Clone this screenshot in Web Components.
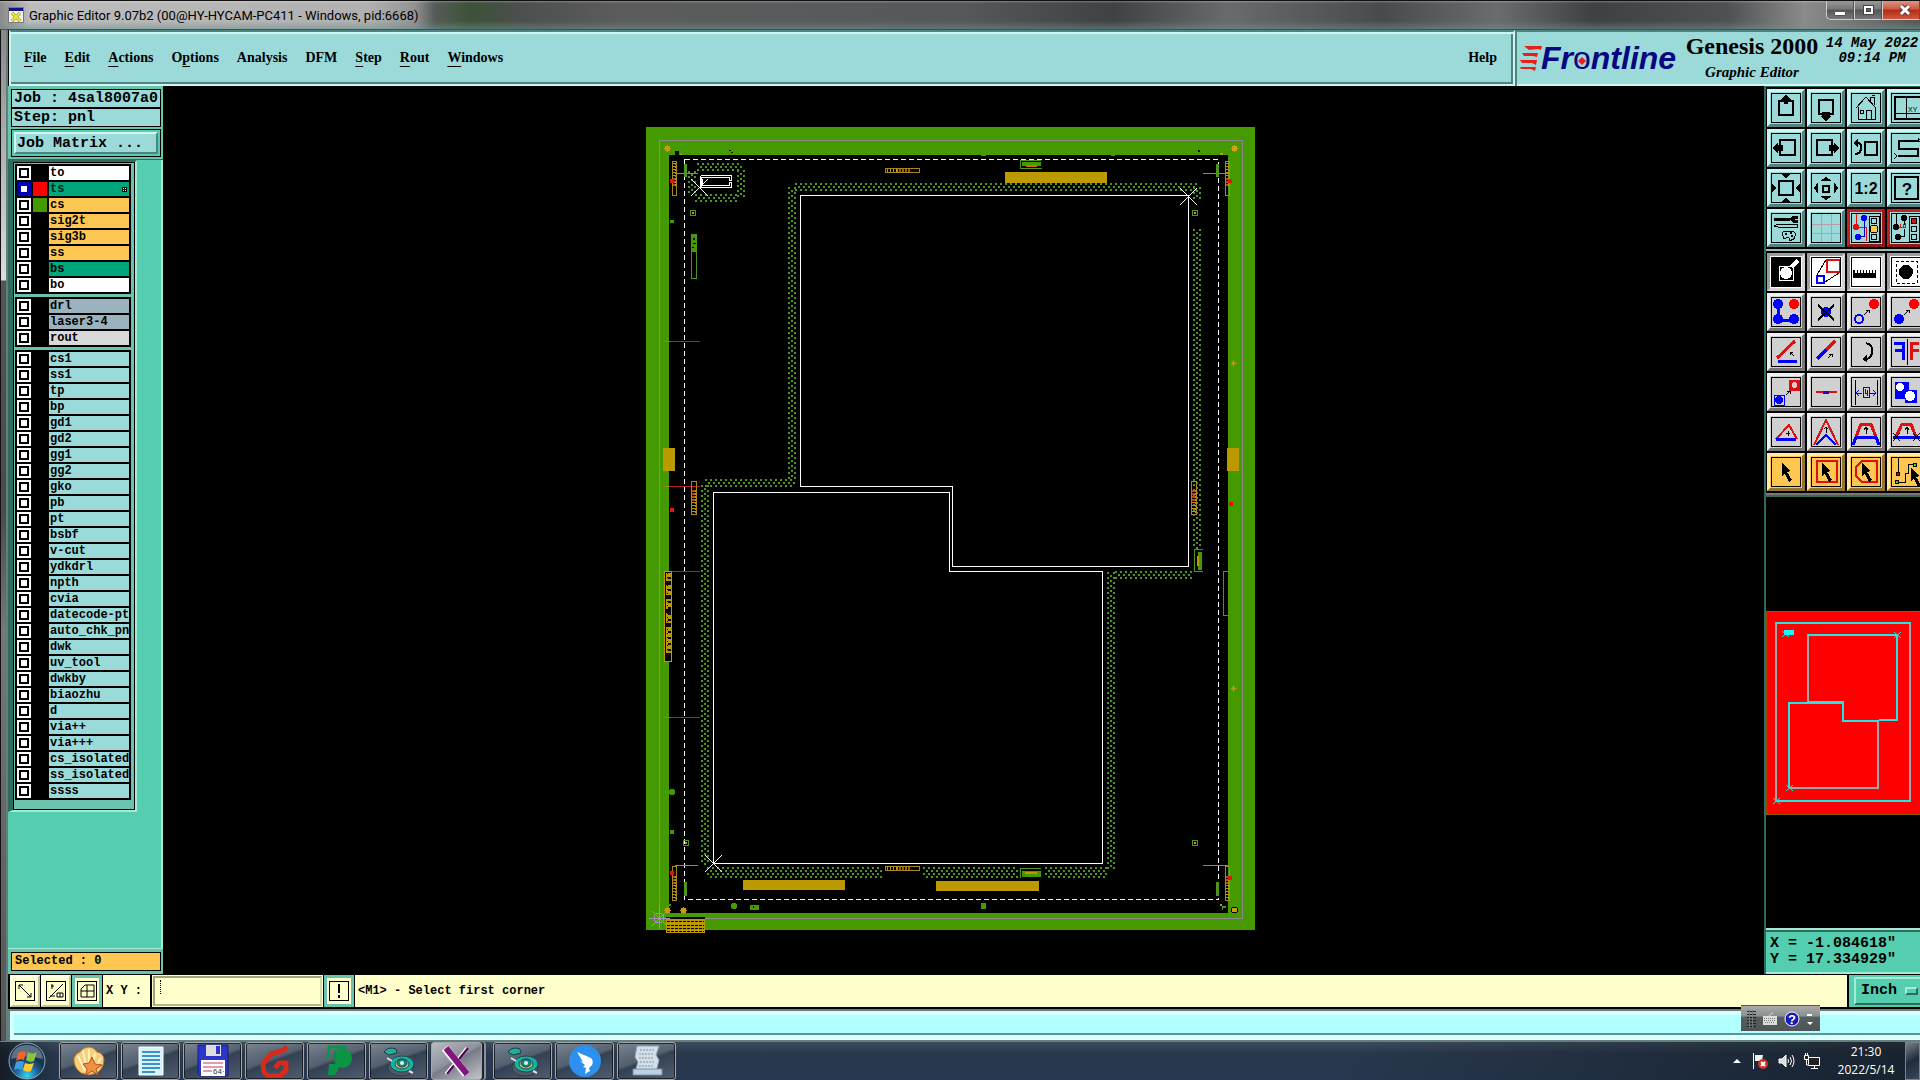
<!doctype html>
<html lang="en">

<head>
	<meta charset="utf-8">
	<title>Graphic Editor 9.07b2</title>
	<meta name="viewport" content="width=device-width, initial-scale=1.0">
	<style>
		:root {
			--aqua: #9cdada;
			--aqua-light: #cdf5f1;
			--aqua-dark: #4f8382;
			--green: #54ceaf;
			--green-mid: #69c3ad;
			--green-dark: #2f6b5f;
			--gold: #fdc751;
			--cream: #feffca;
			--mono: "Liberation Mono", monospace;
			--serif: "Liberation Serif", serif;
			--ui: "Open Sans", sans-serif;
		}
		body {
			margin: 0;
			background: #000;
			overflow: hidden;
		}
	</style>
</head>

<body>
	<desk-top>
		<title-bar>Graphic Editor 9.07b2 (00@HY-HYCAM-PC411 - Windows, pid:6668)</title-bar>
		<app-frame>
			<menu-bar slot="top"></menu-bar>
			<brand-panel slot="top"></brand-panel>
			<job-panel slot="main"></job-panel>
			<board-view slot="main"></board-view>
			<tool-panel slot="main"></tool-panel>
			<command-bar slot="bottom"></command-bar>
			<message-strip slot="bottom"></message-strip>
		</app-frame>
		<task-bar></task-bar>
	</desk-top>

	<script>
		// small helper: every element gets an open root with its own styles
		function define(name, render, after) {
			customElements.define(name, class extends HTMLElement {
				constructor() {
					super();
					this.attachShadow({ mode: 'open' });
				}
				connectedCallback() {
					this.shadowRoot.innerHTML = render(this);
					if (after) after(this, this.shadowRoot);
				}
			});
		}

		define('desk-top', () => `
			<style>
				:host { display: flex; flex-direction: column; height: 100vh; }
			</style>
			<slot></slot>`);

		define('title-bar', () => `
			<style>
				:host {
					display: flex; justify-content: space-between; height: 28px; flex: none;
					border-top: 1px solid #111; border-bottom: 1px solid #3c5553;
					background:
						linear-gradient(#fff3 0 1px, transparent 2px 20px, #6b918a88),
						linear-gradient(90deg, #8a8a8a 0, #bdbdbd 30px, #b0b0b0 370px, #929292 415px, #555b57 435px, #3d5238 470px, #4b4f4d 520px, #5c5c5c 620px, #55595b 50%, #3f4245 58%, #686b6d 64%, #484a4c 72%, #6b6c6e 78%, #3e4042 83%, #505153 90%, #8b8b8b 94%, #555 100%);
				}
				.name { display: flex; align-items: center; gap: 5px; padding-left: 8px; font: 13px Roboto, sans-serif; color: #000; }
				.controls { display: flex; align-items: flex-start; }
				button {
					display: flex; align-items: center; justify-content: center;
					width: 28px; height: 19px; padding: 0; border: 1px solid #ccc; border-top: 0; border-right-color: #555;
					background: linear-gradient(#999, #777 45%, #555 50%, #777);
				}
				button:first-child { border-bottom-left-radius: 5px; }
				button:last-child { width: 38px; padding-left: 8px; background: linear-gradient(#df9383, #c95b46 45%, #b32c14 50%, #cf563c); }
			</style>
			<span class="name">
				<svg width="16" height="16" viewBox="0 0 16 16" aria-hidden="true"><path fill="#eee" stroke="#777" d="M.5.5h15v15H.5z"/><path fill="#118" d="M1 1h14v3H1z"/><path stroke="#774" stroke-width="3" d="m4 6 8 8m0-8-8 8"/><path stroke="#ee2" stroke-width="2" d="m4 6 8 8m0-8-8 8"/></svg>
				<slot></slot>
			</span>
			<span class="controls">
				<button aria-label="Minimize"><svg width="14" height="12"><path fill="#fff" stroke="#555" d="M1.500 7.500h11v4h-11z"/></svg></button>
				<button aria-label="Maximize"><svg width="13" height="12"><path fill="none" stroke="#444" stroke-width="4" d="M3 3h7v6H3z"/><path fill="none" stroke="#fff" stroke-width="2" d="M3 3h7v6H3z"/></svg></button>
				<button aria-label="Close"><svg width="14" height="12"><path stroke="#633" stroke-width="5" d="m3 2 8 8m0-8-8 8"/><path stroke="#fff" stroke-width="3" d="m3 2 8 8m0-8-8 8"/></svg></button>
			</span>`);

		define('app-frame', () => `
			<style>
				:host { display: flex; flex: 1; min-height: 0; background: #000; }
				.edge { flex: none; width: 5px; border: solid #111; border-width: 0 1px; border-right: 2px solid #62807b; background: linear-gradient(#888, #aaa 100px, #ddd 250px, #555 251px, #4a4a4a 480px, #777 600px, #555); }
				.client { flex: 1; min-width: 0; display: flex; flex-direction: column; }
				.top { display: flex; height: 56px; flex: none; padding-left: 1px; }
				.main { display: flex; flex: 1; min-height: 0; }
			</style>
			<div class="edge"></div>
			<div class="client">
				<div class="top"><slot name="top"></slot></div>
				<div class="main"><slot name="main"></slot></div>
				<slot name="bottom"></slot>
			</div>`);

		const menus = ['<u>F</u>ile', '<u>E</u>dit', '<u>A</u>ctions', 'O<u>p</u>tions', 'Analysis', 'DFM', '<u>S</u>tep', '<u>R</u>out', '<u>W</u>indows'];

		define('menu-bar', () => `
			<style>
				:host {
					flex: 1; display: flex; align-items: center; justify-content: space-between; box-sizing: border-box; padding: 0 16px 0 13px;
					border: 2px solid; border-color: var(--aqua-dark) var(--aqua-light) var(--aqua-light);
					background: var(--aqua); box-shadow: inset 0 2px var(--aqua-light), inset -2px -2px var(--aqua-dark);
				}
				nav { display: flex; gap: 18px; }
				button { padding: 0; border: 0; background: none; color: #000; font: bold 14px/20px var(--serif); }
				u { text-underline-offset: 4px; text-decoration-thickness: 1px; }
			</style>
			<nav>${menus.map(m => `<button>${m}</button>`).join('')}</nav>
			<button>Help</button>`);

		define('brand-panel', () => `
			<style>
				:host {
					flex: none; width: 405px; display: flex; box-sizing: border-box; padding-left: 3px; overflow: hidden;
					background: var(--aqua); border: solid var(--aqua-dark); border-width: 2px 0 0 2px;
					box-shadow: inset 0 -2px var(--aqua-light); color: #000; white-space: nowrap;
				}
				svg { flex: none; margin-top: 8px; }
				.title { flex: none; width: 140px; text-align: center; }
				h1 { margin: 0; font: bold 24px/28px var(--serif); }
				h2 { margin: 0; padding-top: 4px; font: italic bold 15px/16px var(--serif); }
				time { flex: none; width: 96px; padding: 4px 0 0 2px; text-align: center; font: italic bold 14px/15px var(--mono); }
			</style>
			<svg width="162" height="36" viewBox="0 0 162 36">
				<g fill="#e8201c"><path d="M4 6h18l-1 4-3-1-9 1zM2 13h16l-1 4-4-1H4zM0 20h17l-1 5-4-2H2zM0 27h16l-1 4-4-2H1z"/></g>
				<text x="21" y="29" font-family="Liberation Sans, sans-serif" font-size="32" font-weight="bold" font-style="italic" fill="#070780">Fr<tspan font-weight="normal" font-style="normal">o</tspan>ntline</text>
				<path fill="#e8201c" d="m62 17 4 4-4 4-4-4z"/>
			</svg>
			<div class="title"><h1>Genesis 2000</h1><h2>Graphic Editor</h2></div>
			<time>14 May 2022<br>09:14 PM</time>`);

		const W = '#fff', T = '#00a67c', G = '#fdc751', B = '#9ab3bf', L = '#d9d9d9', A = '#9cdada';
		const groups = [
			[['to', W], ['ts', T, '#f00', true], ['cs', G, '#449a00'], ['sig2t', G], ['sig3b', G], ['ss', G], ['bs', T], ['bo', W]],
			[['drl', B], ['laser3-4', B], ['rout', L]],
			['cs1', 'ss1', 'tp', 'bp', 'gd1', 'gd2', 'gg1', 'gg2', 'gko', 'pb', 'pt', 'bsbf', 'v-cut', 'ydkdrl', 'npth', 'cvia',
				'datecode-ptc', 'auto_chk_pnl', 'dwk', 'uv_tool', 'dwkby', 'biaozhu', 'd', 'via++', 'via+++', 'cs_isolated_', 'ss_isolated_', 'ssss'].map(n => [n, A])
		];

		define('layer-row', el => `
			<style>
				:host { display: grid; grid-template-columns: 14px 14px 1fr; gap: 2px; height: 14px; }
				input { appearance: none; margin: 0; width: 14px; height: 14px; border: 2px solid #fff; background: #fff; box-shadow: inset 0 0 0 2px #000; }
				input:checked { border-color: #0000b8; box-shadow: inset 0 0 0 2px #0000b8; }
				.swatch { background: ${el.getAttribute('swatch') || '#000'}; }
				label { display: flex; justify-content: space-between; align-items: center; overflow: hidden; padding: 0 2px 0 1px; font: bold 12px/14px var(--mono); white-space: nowrap; color: #000; background: ${el.getAttribute('tone')}; }
				:host([active]) label { color: #00281a; }
				svg { flex: none; }
			</style>
			<input type="checkbox" id="on" ${el.hasAttribute('active') ? 'checked' : ''}>
			<span class="swatch"></span>
			<label for="on"><slot></slot>${el.hasAttribute('active') ? '<svg width="5" height="5"><path fill="#000" d="M0 0h5v5H0z"/><path fill="#fff" d="M1 1h1v1H1zM3 1h1v1H3zM1 3h1v1H1zM3 3h1v1H3z"/></svg>' : ''}</label>`);

		define('job-panel', () => `
			<style>
				:host { flex: none; width: 155px; display: flex; flex-direction: column; font: bold 15px/17px var(--mono); color: #000; background: var(--green-mid); }
				.head { padding: 3px 2px 2px 3px; border-bottom: 1px solid var(--green-dark); }
				.cell { border: 1px solid #000; background: var(--aqua); padding-left: 2px; height: 17px; }
				.matrix { margin-top: 2px; border: 1px solid #000; padding: 2px; background: var(--green); }
				button {
					display: block; width: 100%; height: 22px; padding: 0 1px; text-align: left; font: inherit; color: #000;
					background: var(--aqua); border: 2px solid; border-color: var(--aqua-light) var(--aqua-dark) var(--aqua-dark) var(--aqua-light);
				}
				.list { flex: 1; background: var(--green); border-right: 2px solid #a5ead5; border-bottom: 1px solid #a5ead5; }
				.frame { width: 122px; border: 2px solid; border-color: var(--green-dark) #a5ead5 #a5ead5 var(--green-dark); border-left-width: 5px; }
				.inner { border: 1px solid #000; padding: 1px 3px 9px 1px; background: var(--green-mid); display: grid; gap: 3px; }
				.group { display: grid; gap: 2px; padding: 2px; background: #000; }
				.foot { padding: 3px 2px 3px 3px; }
				.count { border: 1px solid #000; background: var(--gold); padding-left: 3px; font-size: 12px; }
			</style>
			<div class="head">
				<div class="cell">Job : 4sal8007a0</div>
				<div class="cell">Step: pnl</div>
				<div class="matrix"><button>Job Matrix ...</button></div>
			</div>
			<div class="list"><div class="frame"><div class="inner">
				${groups.map(g => `<div class="group">${g.map(([n, tone, sw, on]) =>
					`<layer-row tone="${tone}" ${sw ? `swatch="${sw}"` : ''} ${on ? 'active' : ''}>${n}</layer-row>`).join('')}</div>`).join('')}
			</div></div></div>
			<div class="foot"><div class="count">Selected : 0</div></div>`);

		// panel artwork
		const rect = (x, y, w, h, f) => `<rect x="${x}" y="${y}" width="${w}" height="${h}" fill="${f}"/>`;
		const box = (x, y, w, h, s) => `<rect x="${x}.5" y="${y}.5" width="${w - 1}" height="${h - 1}" fill="none" stroke="${s}"/>`;
		const star = (x, y, c) => `<path fill="${c}" d="M${x - 3} ${y}h7v1h-7zM${x} ${y - 3}h1v7h-1zM${x - 2} ${y - 2}h5v5h-5z"/>`;
		const ochre = '#bd9900', leaf = '#449a00', dim = '#4f9320';

		// upright test strip: outline plus a run of marks, with a red part between
		function strip(x, y, w, h, flip) {
			let s = box(x, y, w, h, '#a8871c');
			for (let i = 2; i < h * 0.7; i += 3) {
				const yy = flip ? y + h - i - 2 : y + i;
				s += rect(x + 1, yy, w - 2, 1, ochre) + rect(x + w - 2, yy + 1, 1, 1, ochre);
				if (i > h * 0.4) s += rect(x + 1, yy, w - 3, 2, '#b84a0a');
			}
			return s;
		}
		function flatStrip(x, y) {
			let s = box(x, y, 35, 5, '#a8871c');
			for (let i = 2; i < 24; i += 3) s += rect(x + i, y + 1, i < 10 ? 1 : 2, 3, i < 12 ? ochre : '#a85a10');
			return s;
		}
		function idLabel() {
			let s = rect(664, 571, 8, 91, '#000') + box(664, 571, 8, 91, ochre);
			for (let i = 2; i < 82; i += 2) {
				if (i % 14 > 9 && i < 55) continue;
				s += rect(666, 571 + i, i % 3 ? 5 : 2, 2, ochre) + (i % 4 ? rect(667, 571 + i, 1, 1, '#000') : '');
			}
			return s;
		}
		function grid() {
			let s = rect(666, 917, 39, 2, '#000') + rect(666, 919, 39, 14, ochre);
			for (const y of [921, 925, 928, 931]) s += `<path stroke="#000" stroke-dasharray="3 1" d="M667 ${y}.5h37"/>`;
			return s;
		}
		// staggered 2px dots filling a band; rows are 3px apart in flat bands, columns in upright ones
		function dots(x, y, w, h) {
			let d = '';
			const flat = w > h;
			const sx = flat ? 5 : 6, sy = flat ? 6 : 5;
			for (let j = 0; j + 2 <= h; j += sy)
				for (let i = 0; i + 2 <= w; i += sx) {
					d += `M${x + i} ${y + j}h2v2h-2z`;
					if (i + 5 <= w && j + 5 <= h) d += `M${x + i + 3} ${y + j + 3}h2v2h-2z`;
				}
			return `<path fill="${dim}" d="${d}"/>`;
		}

		define('board-view', () => `
			<style>
				:host { flex: 1; min-width: 0; background: #000; }
				svg { display: block; width: 100%; height: 100%; }
			</style>
			<svg viewBox="163 86 1601 888" shape-rendering="crispEdges" role="img" aria-label="Panel pnl">
				${rect(646, 127, 609, 803, leaf)}
				${rect(669, 155, 559, 758, '#000')}
				${box(659, 140, 584, 779, '#8f8790')}
				${dots(795, 183, 402, 8)}${dots(788, 187, 8, 292)}${dots(705, 479, 90, 8)}${dots(701, 485, 8, 380)}
				${dots(707, 867, 176, 11)}${dots(923, 867, 96, 11)}${dots(1045, 867, 62, 11)}${dots(1107, 572, 8, 298)}
				${dots(1115, 571, 79, 8)}${dots(1193, 187, 8, 12)}${dots(1193, 229, 8, 320)}
				${dots(697, 163, 46, 8)}${dots(737, 170, 8, 29)}${dots(695, 194, 42, 8)}${dots(688, 171, 8, 23)}
				<path fill="none" stroke="#fff" stroke-dasharray="5 3" d="M684.500 159.500H1218.500V899.500H684.500Z"/>
				<g fill="none" stroke="#fff">
					<path d="M800.500 195.500H1188.500V566.500H952.500V486.500H800.500ZM713.500 492.500H949.500V571.500H1102.500V863.500H713.500Z"/>
					<path d="M700.500 175.500h31v5h-2v-3h-28v9M700.500 175.500v12h31v-5h-2v3h-27v-7"/>
					<path d="m1180 188 17 17m0-17-17 17M705 855l17 17m0-17-17 17M691 179l17 17m0-17-17 17"/>
				</g>
				${rect(1005, 172, 102, 11, ochre)}${rect(743, 880, 102, 10, ochre)}${rect(936, 881, 103, 10, ochre)}
				${rect(663, 448, 12, 23, ochre)}${rect(1227, 448, 12, 23, ochre)}
				${[341, 486, 571, 717].map(y => rect(669, y, 31, 1, '#b81e1e') + rect(664, y, 6, 1, '#8d8b14')).join('')}
				${[173, 865].map(y => rect(675, y, 23, 1, '#a68732') + rect(1203, y, 25, 1, '#a68732')).join('')}
				${strip(672, 161, 5, 35)}${strip(1225, 161, 5, 35)}${strip(672, 866, 5, 35, true)}${strip(1225, 866, 5, 35, true)}
				${strip(691, 481, 6, 34, true)}${strip(1191, 481, 6, 34, true)}
				${flatStrip(885, 168)}${flatStrip(885, 866)}
				${[[670, 179], [670, 508], [670, 871], [1228, 179], [1229, 502], [1228, 876]].map(([x, y]) => rect(x, y, 4, 4, '#e81010')).join('')}
				${idLabel()}${grid()}
				${box(691, 234, 6, 45, dim)}${rect(692, 235, 4, 17, leaf)}${rect(693, 238, 2, 2, '#000')}${rect(693, 243, 3, 1, '#000')}${rect(692, 247, 2, 1, '#000')}
				<path fill="none" stroke="${dim}" d="M1041 160.500h-20.500v8h21M1041 868.500h-20.500v9M1203 549.500h-8.500v22h8M1228 571.500h-4.500v44h4.500"/>
				${rect(1022, 162, 19, 4, leaf)}${rect(1026, 165, 11, 2, '#d66b00')}${rect(1022, 871, 19, 6, leaf)}${rect(1025, 872, 12, 2, ochre)}${rect(1198, 552, 4, 18, leaf)}${rect(1197, 556, 2, 10, ochre)}
				${[[690, 210], [1192, 210], [1192, 840], [683, 840]].map(([x, y]) => box(x, y, 6, 6, dim) + rect(x + 2, y + 2, 2, 2, ochre)).join('')}
				${rect(684, 164, 3, 13, dim)}${rect(1216, 164, 3, 13, dim)}${rect(684, 882, 3, 14, dim)}${rect(1216, 882, 3, 14, dim)}
				${star(667, 148, '#c79b10')}${star(1234, 148, '#d0a010')}${star(667, 910, '#c79b10')}${star(683, 910, '#c79b10')}
				${[363, 688].map(y => rect(1231, y, 6, 1, '#b09b10') + rect(1233, y - 3, 1, 7, '#b09b10') + rect(1232, y - 1, 3, 3, '#b09b10')).join('')}
				<circle cx="1234.500" cy="910" r="3" fill="#c7a010" stroke="#000"/>
				<circle cx="734" cy="906" r="3" fill="${leaf}"/><circle cx="672" cy="792" r="3" fill="${leaf}"/>
				${rect(670, 830, 4, 4, leaf)}${rect(670, 220, 4, 3, leaf)}${rect(750, 905, 9, 5, leaf)}${rect(753, 906, 1, 2, '#000')}${rect(981, 903, 5, 6, leaf)}
				${rect(675, 151, 4, 4, '#000')}${rect(680, 153, 2, 2, '#8b9b10')}${rect(729, 150, 2, 1, '#000')}${rect(731, 152, 2, 1, '#000')}${rect(1198, 150, 2, 2, '#000')}${rect(981, 155, 5, 1, leaf)}${rect(1111, 155, 4, 1, leaf)}${rect(1220, 153, 3, 2, ochre)}
				${rect(1220, 904, 2, 2, ochre)}${rect(1222, 906, 4, 2, dim)}${rect(1222, 907, 1, 3, dim)}${rect(669, 904, 2, 2, leaf)}
				<g fill="none" stroke="#a98bc4"><circle cx="659" cy="918" r="5"/><path d="M649 918.500h21M659.500 908v21M652 911l15 15m0-15-15 15"/></g>
			</svg>`);

		// tool glyphs, each on a 28 x 28 field
		const dot = (x, y, r, c) => `<circle cx="${x}" cy="${y}" r="${r}" fill="${c}"/>`;
		const line = (d, c = '#000', w = 1) => `<path d="${d}" fill="none" stroke="${c}" stroke-width="${w}"/>`;
		const fill = (d, c = '#000') => `<path d="${d}" fill="${c}"/>`;
		const pointer = 'M10 5l9 8-4 1 5 8-3 2-4-8-3 2z';
		const lights = (c, top, mid) => line('M17 2h10v25H17z') + `<g stroke="#000"><circle cx="22" cy="7" r="3" fill="${top}"/><circle cx="22" cy="15" r="${mid === 'none' ? 3 : 4}" fill="${mid}"/><circle cx="22" cy="23" r="3" fill="none"/></g>`;
		const glyphs = {
			up: line('M7 7h14v14H7z', '#000', 2) + fill('M14 1l6 5h-4v4h-4V6H8z'),
			down: line('M7 6h14v14H7z', '#000', 2) + fill('M14 27l-6-5h2v-4h8v4h2z'),
			home: line('M4 14 14 3l10 11M6 13v12h17V13M18 7V3h4v8M14 25v-9h5v9M8 16h3v3H8zM20 2l3-1'),
			zones: line('M3 3h27v22H3z', '#000', 2) + line('M14 3v22M3 19h26') + '<text x="16" y="18" font-family="Liberation Sans" font-size="7">XY</text>',
			left: line('M8 6h15v15H8z', '#000', 2) + fill('M1 14l5-6v3h5v6H6v3z'),
			right: line('M5 6h15v15H5z', '#000', 2) + fill('M27 14l-5-6v3h-5v6h5v3z'),
			back: line('M13 8h12v13H13z', '#000', 2) + line('M3 9h3q3 0 3 4 0 7-6 7', '#000', 2) + fill('M1 9l5-4v8z'),
			path: line('M26 7H7v8h19v7H6', '#000', 2) + line('M29 4l-3 3M26 4v3h3M5 22l-3-3M5 22l-3 3'),
			fit: line('M7 7h14v14H7z', '#000', 2) + fill('M9 0h10l-5 4zM9 28h10l-5-4zM0 9v10l4-5zM28 9v10l-4-5z'),
			shrink: line('M11 12h6v6h-6z', '#000', 2) + fill('M14 3l6 4H8zM14 26l6-4H8zM2 14l4-6v12zM26 14l-4-6v12z'),
			ratio: '<text x="14" y="20" text-anchor="middle" font-family="Liberation Sans" font-weight="bold" font-size="16">1:2</text>',
			help: line('M3 3h23v22H3z', '#000', 2) + '<text x="15" y="21" text-anchor="middle" font-family="Liberation Sans" font-size="17" font-weight="bold">?</text>',
			setup: line('M2 5h16M26 3h-4l-2 2 2 2h4', '#000', 3) + line('M2 12l4-2h19v3H6z') + line('M11 22q-3-5 5-5 9 0 7 5-1 5-6 4 1-4-3-2-3 2-3-2z') + dot(14, 20, 1, '#000') + dot(19, 19, 1, '#000') + dot(20, 22, 1, '#000'),
			grid: line('M9 0v28M19 0v28M0 10h28M0 19h28', '#b89daa'),
			net: line('M4 0v12M4 13h10v14', '#e01010') + line('M12 4v18H6', '#00c') + dot(4, 13, 3, '#e01010') + dot(12, 4, 3, '#00f') + dot(6, 23, 3, '#00f') + lights('', 'none', '#fdc751'),
			stop: line('M4 0v12M12 4v7M12 15v7H6') + line('M6 13h8M8 13v-3M11 13v-3M13 13V9', '#e01010') + dot(4, 13, 3, '#000') + dot(12, 4, 3, '#000') + dot(6, 23, 3, '#000') + lights('', '#e01010', 'none'),
			pad: fill('M0 0h28v28H0z') + fill('M18 8l6-7 3 3-6 6z', '#fff') + line('M7 8h14v14H7z', '#fff', 1) + dot(14, 15, 6, '#fff'),
			copy: line('M15 2h13v12H15z', '#e01010', 2) + line('M5 18h7v7H5z', '#00f', 2) + line('M5 17 14 2M13 24l14-9'),
			ruler: fill('M1 12h2v3h2v-3h1v3h2v-3h1v3h2v-3h1v3h2v-3h1v3h2v-3h1v3h2v-3h1v3h2v-3h1v8H1z'),
			mark: dot(14, 14, 7, '#000') + '<path d="M4 3h21v22H4z" fill="none" stroke="#000" stroke-dasharray="3 2"/>',
			nodes: line('M6 6v16h16', '#00f', 3) + dot(6, 6, 5, '#00f') + dot(22, 6, 5, '#f00') + dot(6, 21, 5, '#00f') + dot(22, 21, 5, '#00f'),
			erase: dot(14, 14, 5, '#00f') + line('M6 7l16 15M22 7 6 22', '#000', 2),
			moveo: dot(22, 6, 5, '#f00') + '<circle cx="7" cy="21" r="4" fill="none" stroke="#00f" stroke-width="2"/>' + line('M12 17l5-5M14 12h3v3'),
			movef: dot(22, 6, 5, '#f00') + dot(7, 21, 5, '#00f') + line('M12 17l5-5M14 12h3v3'),
			angle: line('M5 20 23 3', '#e01010', 3) + line('M6 23h19', '#00f', 3) + line('M22 18l-4-4M18 17v-3h3'),
			slope: line('M5 21l9-9', '#00f', 3) + line('M14 12l9-9', '#e01010', 3) + line('M16 20l4-4M17 16h3v3'),
			turn: line('M14 5q7 2 6 8 0 8-7 8', '#000', 2) + fill('M10 21l5-4v7z'),
			mirror: line('M2 5h9v17M3 12h8', '#00f', 3) + line('M15 1v26') + line('M27 5h-8v17M27 12h-8', '#e01010', 3),
			swap: line('M18 3h9v9h-9z', '#e01010', 2) + '<circle cx="22.500" cy="7" r="4" fill="#e8c8c8" stroke="#e01010" stroke-width="2"/>' + line('M2 17h10v10H2z', '#00f', 1) + dot(7, 22, 4, '#00f') + line('M14 17l3-3M15 13h3v3'),
			merge: line('M4 14h21', '#e01010', 2) + line('M11 14h6', '#3a00b8', 3),
			width: line('M3 2v25M25 2v25') + line('M5 15h5M18 15h5M7 12l-3 3 3 3M21 12l3 3-3 3M11 9h6v10h-6zM13 11v4h3M15 12v6', '#00f'),
			group: fill('M3 4h14v8h8v13H13v-4H3z', '#00f') + dot(8, 9, 4, '#fff') + dot(18, 18, 5, '#fff'),
			tri: line('M4 21 17 7l8 14', '#e01010', 2) + line('M4 21h20', '#00f', 3) + line('M16 18v-5M14 15h4'),
			peak: line('M2 27 14 2l12 25', '#e01010', 2) + line('M4 27l10-10 10 10', '#00f', 2) + line('M14 15V9M12 11l2-2 2 2'),
			trap: line('M4 19 9 6h10l5 13', '#e01010', 3) + line('M1 27l3-8h20l3 8', '#00f', 3) + line('M14 16V9M12 12l2-3 2 3'),
			cross: line('M4 19 10 6h9l5 13', '#e01010', 3) + line('M1 19h28', '#00f', 3) + line('M15 16V9M13 12l2-3 2 3M1 15l7 8M8 15l-7 8M21 15l7 8M28 15l-7 8'),
			pick: fill(pointer),
			pickbox: line('M5 3h20v21H5z', '#e01010', 2) + fill(pointer),
			pickpoly: line('M10 3h15v21H10l-6-6V9z', '#e01010', 2) + fill(pointer),
			picknet: line('M6 0v14M5 24h8v-9h3V6h6') + `<g stroke="#000"><circle cx="6" cy="16" r="2" fill="#c00"/><circle cx="5" cy="24" r="2" fill="#2d2"/><circle cx="23" cy="7" r="2" fill="#2d2"/></g>` + '<path transform="translate(9 5)" d="M10 5l9 8-4 1 5 8-3 2-4-8-3 2z"/>'
		};
		const toolsTop = 'up down home zones left right back path fit shrink ratio help setup grid net stop'.split(' ');
		const toolsLow = 'pad copy ruler mark nodes erase moveo movef angle slope turn mirror swap merge width group tri peak trap cross pick pickbox pickpoly picknet'.split(' ');
		const tone = n => /^(net|stop)$/.test(n) ? 'red' : /^(pad|copy|ruler|mark)$/.test(n) ? 'white' : /^pick/.test(n) ? 'gold' : toolsTop.includes(n) ? 'aqua' : 'gray';

		define('tool-button', el => `
			<style>
				:host { display: block; --face: #9cdada; --hi: #cdf5f1; --lo: #4f8382; }
				:host([tone=red]) { --hi: #c52020; --lo: #8e1919; }
				:host([tone=white]) { --face: #fff; --hi: #9d9d9d; --lo: #d5d5d5; }
				:host([tone=gray]) { --face: #d0d0d0; --hi: #f1f1f1; --lo: #777; }
				:host([tone=gold]) { --face: #fdc751; --hi: #ffebaf; --lo: #98752d; }
				button { display: block; width: 38px; height: 38px; padding: 1px; border: 3px solid; border-color: var(--hi) var(--lo) var(--lo) var(--hi); background: var(--face); }
				svg { display: block; width: 28px; height: 28px; border: 1px solid #000; overflow: hidden; }
			</style>
			<button aria-label="${el.getAttribute('name')}"><svg viewBox="0 0 28 28" shape-rendering="crispEdges">${glyphs[el.getAttribute('name')]}</svg></button>`);

		define('mini-map', () => `
			<style>
				:host { flex: 1; display: flex; align-items: center; background: #000; }
				svg { width: 100%; }
			</style>
			<svg viewBox="0 0 154 204" role="img" aria-label="Overview">
				<g shape-rendering="crispEdges" fill="none" stroke-width="2">
					<path fill="#f00" stroke="#8b5a00" stroke-width="1" d="M.500.500H160V203.500H.500z"/>
					<path stroke="#a7a7a7" d="M10 12v178M144 12v178M42 23v68M112 110v67H23"/>
					<path stroke="#22e6e6" d="M9 12h136M9 190h136M41 24h90v85h-18M41 91h36v19h36M23 177V92h54v18"/>
				</g>
				<path fill="#1ff" d="M18 19h10v5H18z"/>
				<path fill="none" stroke="#3dd" d="m16 20 7 6m0-6-7 6M128 21l7 6m0-6-7 6M20 174l7 6m0-6-7 6M7 187l7 6m0-6-7 6"/>
			</svg>`);

		const palette = list => list.map(n => `<tool-button name="${n}" tone="${tone(n)}"></tool-button>`).join('');
		define('tool-panel', () => `
			<style>
				:host { flex: none; width: 156px; box-sizing: border-box; display: flex; flex-direction: column; overflow: hidden; background: #000; border-left: 2px solid var(--green-dark); }
				.tools { display: grid; grid-template-columns: repeat(4, 38px); gap: 2px; padding: 2px 0 2px 1px; border-top: 1px solid var(--green-dark); border-bottom: 2px solid #9cbdb8; }
				.low { padding-top: 2px; border-top: 0; border-bottom: 2px solid #777; }
				mini-map { border-top: 2px solid var(--green-dark); }
				.coord { flex: none; height: 36px; padding: 6px 4px 0; border: solid; border-width: 2px 0; border-color: #a5ead5; background: var(--green); font: bold 15px/16px var(--mono); color: #000; white-space: pre; box-shadow: inset 0 2px var(--green-dark); }
			</style>
			<div class="tools">${palette(toolsTop)}</div>
			<div class="tools low">${palette(toolsLow)}</div>
			<mini-map></mini-map>
			<div class="coord">X = -1.084618"
Y = 17.334929"</div>`);

		define('command-bar', () => `
			<style>
				:host { flex: none; display: flex; height: 32px; padding: 1px 0 2px 2px; gap: 1px; background: #000; font: bold 12px/20px var(--mono); color: #000; }
				button { flex: none; display: flex; align-items: center; justify-content: center; width: 30px; padding: 0; border: 2px solid #fffff0; border-color: #fffff0 #c5c59b #c5c59b #fffff0; background: var(--cream); }
				button.on { border: 3px solid var(--green-mid); }
				svg { display: block; width: 18px; height: 18px; border: 1px solid #000; fill: none; stroke: #000; }
				.field { flex: none; display: flex; gap: 2px; }
				label { display: flex; align-items: center; width: 47px; box-sizing: border-box; padding-left: 3px; background: var(--cream); white-space: pre; }
				input { box-sizing: border-box; width: 171px; border: 3px solid; border-color: #a2a27c #dadaae #b4b48c #a2a27c; outline: 1px solid var(--cream); outline-offset: -1px; background: var(--cream); font: inherit; }
				.entry { position: relative; display: flex; }
				.entry::before { content: ""; position: absolute; left: 8px; top: 5px; height: 14px; border-left: 1px dotted #000; }
				output { flex: 1; display: flex; align-items: center; padding-left: 3px; background: var(--cream); }
				.unit { flex: none; width: 71px; box-sizing: border-box; display: flex; align-items: stretch; overflow: hidden; padding: 2px 0 2px 5px; margin-left: 1px; background: var(--green); }
				.pop { flex: none; width: 80px; display: flex; align-items: center; border: 2px solid; border-color: #a5ead5 var(--green-dark) var(--green-dark) #a5ead5; }
				select { appearance: none; border: 0; background: none; padding: 0 0 0 5px; width: 49px; font: bold 15px/20px var(--mono); color: #000; }
				.bar { width: 9px; height: 4px; border: 2px solid; border-color: #a5ead5 var(--green-dark) var(--green-dark) #a5ead5; }
			</style>
			<button aria-label="Zoom corner"><svg viewBox="0 0 18 18"><path d="M3 3l12 12M3 7V3h4M15 11v4h-4"/></svg></button>
			<button aria-label="Angle snap"><svg viewBox="0 0 18 18"><path d="M2 16 16 2M4 4h3M5 2v5M3 14h5M10 11h6v4h-6zM13 11v4"/></svg></button>
			<button class="on" aria-label="Grid snap"><svg viewBox="0 0 18 18"><path d="M7 3h9v12H3V7zM3 9h13M9 3v12"/></svg></button>
			<div class="field">
				<label for="xy">X Y :</label>
				<span class="entry"><input id="xy" type="text"></span>
			</div>
			<button class="on" aria-label="Alert"><svg viewBox="0 0 18 18"><path stroke-width="2" d="M9 2v9M9 13v3"/></svg></button>
			<output>&lt;M1&gt; - Select first corner</output>
			<div class="unit"><div class="pop"><select aria-label="Units"><option>Inch</option></select><span class="bar"></span></div></div>`);

		define('message-strip', () => `
			<style>
				:host { flex: none; position: relative; height: 32px; box-sizing: border-box; padding: 2px 0 1px 2px; background: #66817d; }
				.line { height: 100%; box-sizing: border-box; background: #b2ffff; border: solid #d9ffff; border-width: 4px 0 5px 4px; box-shadow: inset 0 -2px #5c9595; }
				/* floating input-method bar, over the strip and the bar above it */
				.ime { position: absolute; right: 100px; top: -4px; width: 79px; height: 26px; box-sizing: border-box; display: flex; align-items: center; justify-content: space-around; padding: 0 3px; border-top: 1px solid #555; background: linear-gradient(#aaa, #889090 40%, #555d5e 45%, #4d5555); }
				.ime button { padding: 0; border: 0; background: none; display: flex; }
			</style>
			<div class="line"></div>
			<div class="ime">
				<svg width="9" height="18"><path stroke="#222" stroke-width="9" stroke-dasharray="1 2" d="M4.500 1v16"/><path stroke="#777" d="M2.500 0v18M5.500 0v18"/></svg>
				<button aria-label="Keyboard"><svg width="16" height="14"><path fill="#ddd" d="M1 4h14v9H1z"/><path stroke="#777" stroke-dasharray="1 1" d="M2 6.500h12M2 8.500h12M3 10.500h10"/><path fill="none" stroke="#ddd" d="M7 4q1-2 4-3"/></svg></button>
				<button aria-label="Help"><svg width="16" height="16"><circle cx="8" cy="8" r="7" fill="#1717ba" stroke="#fff"/><text x="8" y="13" text-anchor="middle" fill="#fff" font-family="Liberation Sans" font-weight="bold" font-size="13">?</text></svg></button>
				<button aria-label="Options"><svg width="8" height="16"><path fill="#fff" d="M1 3h5v2H1zM1 11h6l-3 3z"/></svg></button>
			</div>`);

		const disc = '<g stroke="#244"><ellipse cx="19" cy="23" rx="13" ry="9" fill="#556"/><ellipse cx="20" cy="20" rx="12" ry="8" fill="#14b3a7"/><ellipse cx="20" cy="20" rx="7" ry="5" fill="#c9c968"/><ellipse cx="20" cy="19" rx="5" ry="4" fill="#0a8a88"/></g><circle cx="20" cy="19" r="2" fill="#eee"/><path fill="#29a89c" stroke="#144" d="M2 8q4-6 12-3l1 4-8 2z"/><path stroke="#ddd" stroke-width="2" d="M5 14l5 3M27 27l4 2"/>';
		const apps = {
			'Shell': '<path fill="#f7cf7c" stroke="#b87b25" d="M9 29Q1 23 2 14q2-5 6-6 2-4 8-5 6 0 9 5 6 1 7 7 0 9-7 14l-8 2z"/><path fill="none" stroke="#fff0bd" stroke-width="2" d="M13 27 6 12M15 27 11 7M17 26V5M19 26l4-17M21 27l8-13"/><path fill="#ee9142" stroke="#b5501d" d="m20 13 3 7 7 1-6 4 2 6-6-4-6 4 1-6-4-5 6-1z"/>',
			'Notes': '<path fill="#d8f2fb" stroke="#fff" d="M5 3h24v28H5z"/><path stroke="#3c92c4" stroke-width="2" d="M8 8h18M8 12h18M8 16h18M8 20h18M8 24h18M8 28h13"/>',
			'Save': '<path fill="#2b36c8" stroke="#141d80" d="M2 1h30v31H4l-2-2z"/><path fill="#ddd" d="M10 1h15v11H10z"/><path fill="#2b36c8" d="M20 2h4v8h-4z"/><path fill="#fff" d="M5 16h24v16H5z"/><path stroke="#c63c59" d="M7 19h20M7 23h20M7 27h9"/><text x="17" y="30" font-family="Liberation Sans" font-size="8" fill="#333">64·</text>',
			'Genesis': '<path fill="none" stroke="#d62a1a" stroke-width="5" stroke-linejoin="round" d="M29 3l-5 4-11 3-8 10 1 8 4 4h12l6-6v-7h-7l-4 5"/>',
			'Plotter': '<ellipse cx="23" cy="14" rx="9" ry="10" fill="#0b9444"/><path fill="none" stroke="#0b9444" stroke-width="3" d="M8 16 9 3h17"/><path fill="#0b9444" d="M9 20h10v4l-4 7H8z"/><path stroke="#083" d="M15 6v16"/>',
			'Disc': disc,
			'Exceed': '<path stroke="#fff" stroke-width="3" d="M27 4 6 30"/><path stroke="#505" stroke-width="2" d="M28 4 7 30"/><path stroke="#fff" stroke-width="8" d="M5 4l21 26"/><path stroke="#81157e" stroke-width="6" d="M6 4l21 26"/>',
			'Disc 2': disc,
			'Messenger': '<circle cx="17" cy="17" r="16" fill="#2b90ee"/><path fill="#fff" d="M9 8l14 6q3 3 1 7l-3 3 1 3-5 3 1-6-3-1 2-2-5-4 3 1z"/>',
			'Script': '<path fill="#d3dfe8" stroke="#8ea5b4" d="M7 2h22l-3 9 3 5-3 12H5l3-10-3-5z"/><path fill="#bcd2df" stroke="#7890a0" d="M3 25h29v6H3z"/><path stroke="#8295a0" stroke-dasharray="2 1" d="M10 6h15M9 10h15M9 14h15M10 18h14M9 22h14"/>'
		};

		define('task-button', el => `
			<style>
				:host { display: block; }
				button { display: flex; align-items: center; justify-content: center; width: 59px; height: 38px; padding: 0; border: 1px solid #a0a7af; border-radius: 3px; background: linear-gradient(160deg, #a9b0ba99, #70798599 45%, #3d495988 50%, #667181aa); box-shadow: inset 0 0 0 1px #111c; }
				:host([current]) button { width: 51px; background: linear-gradient(150deg, #b9bbc2, #8f929b 45%, #777b86 50%, #c5c5cc); box-shadow: 2px 0 #20252c, 4px 0 #89909a; margin-right: 8px; }
				svg { display: block; width: 34px; height: 34px; }
			</style>
			<button aria-label="${el.getAttribute('app')}"><svg viewBox="0 0 34 34" fill="none">${apps[el.getAttribute('app')]}</svg></button>`);

		define('task-bar', () => `
			<style>
				:host { flex: none; height: 39px; display: flex; align-items: center; box-sizing: border-box; border-top: 1px solid #6f7982; background: linear-gradient(90deg, #0b0f14aa, transparent 60px 70%, #101820aa), linear-gradient(#3e4c5e, #29384c 30%, #26374f); color: #fff; }
				.start { width: 38px; height: 38px; margin: 0 13px 0 8px; padding: 0; border: 0; background: none; }
				.apps { display: flex; gap: 3px; flex: 1; }
				.tray { display: flex; align-items: center; gap: 8px; }
				.tray button { display: flex; padding: 0; border: 0; background: none; }
				.tray button:first-child { margin-right: 2px; }
				time { width: 74px; text-align: center; font: 12px/18px var(--ui); }
				.tray .peek { width: 15px; height: 38px; margin-left: -6px; box-sizing: border-box; border: 1px solid #78838e; background: linear-gradient(150deg, #77818c, #202c3b 50%, #38475a); }
			</style>
			<button class="start" aria-label="Start">
				<svg width="38" height="38" viewBox="0 0 38 38"><defs><radialGradient id="orb" cy=".9"><stop stop-color="#36d4f6"/><stop offset=".6" stop-color="#1c659c"/><stop offset="1" stop-color="#19344f"/></radialGradient></defs><circle cx="19" cy="19" r="18" fill="url(#orb)" stroke="#8caabd"/><path fill="#fff" opacity=".3" d="M3 17Q5 3 19 3t16 14Q18 12 3 17z"/><path fill="#f0632a" d="M10 11q4-3 8-1l-2 8q-4-2-8 1z"/><path fill="#8bc53f" d="M20 10q4 3 9 0l-3 9q-4 2-8-1z"/><path fill="#3f9de0" d="M8 20q4-2 8 0l-2 8q-4-2-8 0z"/><path fill="#fcc931" d="M17 21q4 2 9 0l-3 8q-4 2-8-1z"/></svg>
			</button>
			<div class="apps">${Object.keys(apps).map(a => `<task-button app="${a}" ${a === 'Exceed' ? 'current' : ''}></task-button>`).join('')}</div>
			<div class="tray">
				<button aria-label="Show hidden icons"><svg width="8" height="16"><path fill="#fff" d="M0 10h8L4 6z"/></svg></button>
				<button aria-label="Action center"><svg width="18" height="18"><path fill="none" stroke="#fff" d="M2.500 1v16"/><path fill="#eee" d="M4 3h8l-1 6H4z"/><circle cx="12" cy="12" r="5" fill="#d52e22"/><path stroke="#fff" stroke-width="2" d="m10 10 4 4m0-4-4 4"/></svg></button>
				<button aria-label="Volume"><svg width="18" height="18"><path fill="#ddd" stroke="#fff" d="M2 7h3l4-4v12l-4-4H2z"/><path fill="none" stroke="#fff" d="M11 7q1 2 0 4M13 5q3 4 0 8M15 3q4 6 0 12"/></svg></button>
				<button aria-label="Network"><svg width="18" height="18"><path fill="#222" stroke="#fff" d="M5.500 5.500h11v8h-11zM8 16.500h7M11.500 13v3"/><path fill="#222" stroke="#fff" d="M1.500 3.500h4v4h-4zM2.500 1v2M4.500 1v2M3.500 8v5h2"/></svg></button>
				<time>21:30<br>2022/5/14</time>
				<button class="peek" aria-label="Show desktop"></button>
			</div>`);
	</script>
</body>

</html>
